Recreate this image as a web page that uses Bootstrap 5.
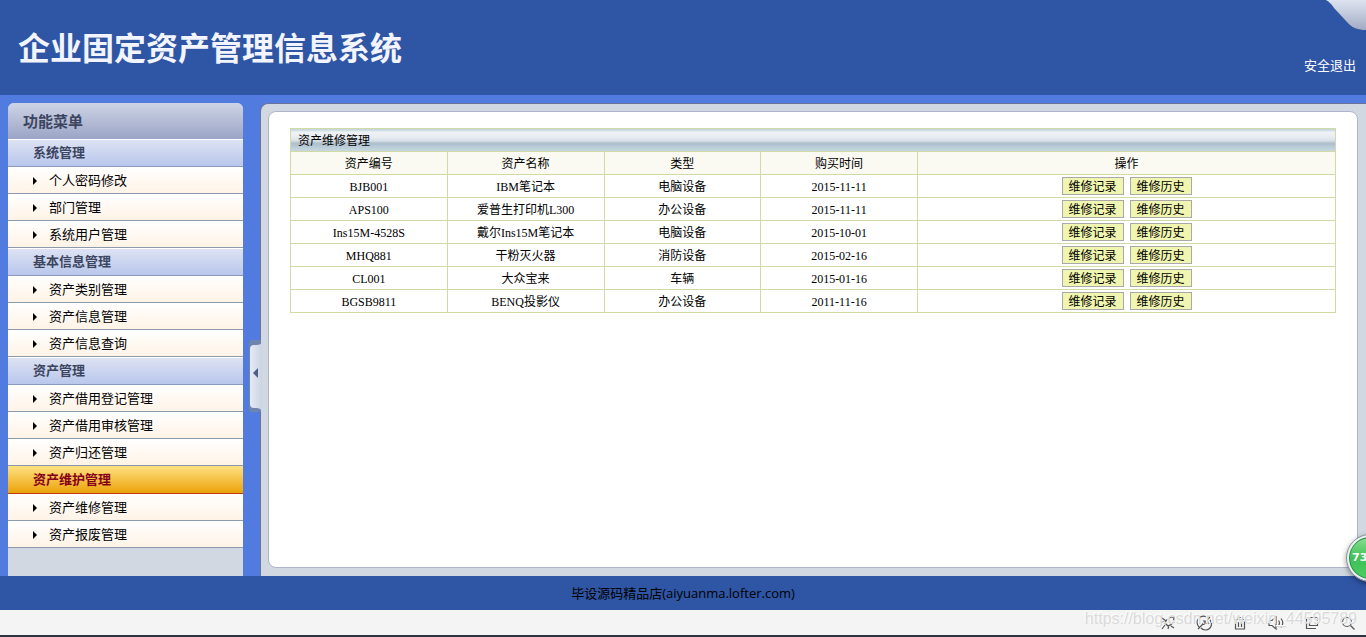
<!DOCTYPE html>
<html lang="zh-CN">
<head>
<meta charset="utf-8">
<meta name="viewport" content="width=device-width, initial-scale=1">
<title>企业固定资产管理信息系统</title>
<link href="https://cdn.jsdelivr.net/npm/bootstrap@5.3.0/dist/css/bootstrap.min.css" rel="stylesheet">
<style>
body{background:#527be0;color:#000;font-family:"Open Sans","Noto Sans CJK SC",sans-serif;font-size:13px;line-height:20px;overflow-x:hidden}
a{color:inherit;text-decoration:none}
.bar-blue{background:#2f55a5}
.masthead{min-height:95px;padding:0 10px 0 18px}
.masthead h1{font-size:32px;line-height:40px;font-weight:700;color:#f2f4ff;margin:28px 0 0}
.logout{color:#fff;margin-bottom:20px}
.corner{position:absolute;top:0;right:0}
.side{width:235px;margin-left:8px;margin-top:8px;background:#d1d8e2;border-radius:6px 6px 0 0;overflow:hidden}
.side-title{height:36px;padding:0 15px;font-size:15px;font-weight:700;color:#3c4560;background:linear-gradient(#cdd4e6,#9ba4c6)}
.grp{height:28px;padding:0 25px;font-size:13px;font-weight:700;color:#3c4560;background:linear-gradient(#dde2f3,#b9c7ec);border-top:1px solid #fff;border-bottom:1px solid #8c9abb}
.grp.on{color:#87001a;background:linear-gradient(#ffdf7d,#eba20a);border-top-color:#ffdf7d;border-bottom-color:#c03a10}
.item{height:27px;padding:0 25px 1px;gap:12px;background:linear-gradient(#fff,#fff3e6);border-bottom:1px solid #8c9aae}
.item::before{content:"";border:4px solid transparent;border-left:4px solid #000;border-right:0;margin-top:3px}
.work{margin:8px 0 0 17px;background:#d1d8e2;border:1px solid #68729a;border-width:1px 0 0 1px;border-radius:8px 0 0 0;padding:7px 8px 8px 7px}
.sheet{background:#fff;border:1px solid #adb5cd;border-radius:8px;padding:16px 21px}
.handle{position:absolute;left:-13px;top:50%;width:14px;height:72px;padding:0;border:0;background:none}
.assets{width:100%;table-layout:fixed;border-collapse:collapse;font-family:"Liberation Serif","Noto Sans CJK SC",serif;font-size:12px;line-height:16px}
.assets th,.assets td{height:23px;padding:1px 0 0;text-align:center;font-weight:400;border:1px solid #cfdaa5;vertical-align:middle}
.assets .t-title th{text-align:left;padding-left:7px;background:linear-gradient(#c5d7de 0 1px,#eef1f6 2px,#eaeef3 7px,#d4dee6 12px,#b0c0cd 13px,#b0c0cd 15px,#b9cbd8 17px,#c8d9e0 22px)}
.assets .t-head th{background:#fafaf2}
.assets td:last-child{padding:0}
.act{display:inline-block;width:62px;height:18px;padding:1px 0 0;border:1px solid #a9a9a9;background:#f0f6b0;color:#000;font-size:12px;line-height:16px;vertical-align:middle}
.act + .act{margin-left:6px}
.foot{height:34px}
.tools{height:27px;background:#f4f4f4;border-bottom:2px solid #2e3340;padding-right:10px;gap:20px}
.tools button{border:0;background:none;padding:0;width:16px;height:16px;line-height:0}
.tools svg{width:16px;height:16px;fill:none;stroke:#555;stroke-width:1.2}
.mark-url{position:absolute;right:9px;top:-2px;font:16px/22px "Liberation Sans",sans-serif;color:#dadada;text-shadow:-1px -1px 0 #fff;pointer-events:none}
.ball{position:absolute;right:-27px;bottom:56px;width:46px;height:46px;border-radius:50%;border:2px solid #eceff0;background:linear-gradient(#8ce093,#3fc157 50%,#4dcc62);outline:1px solid #8a9a98;box-shadow:inset 0 0 0 1px #248c4a,0 2px 6px #0008;color:#fff;font:bold 11px/42px "DejaVu Sans",sans-serif;padding-left:3px}
</style>
</head>
<body>
<div class="position-relative overflow-hidden min-vh-100 d-flex flex-column">
<header class="masthead bar-blue d-flex justify-content-between position-relative">
<h1>企业固定资产管理信息系统</h1>
<a class="logout align-self-end" href="#">安全退出</a>
<svg class="corner" width="40" height="30" aria-hidden="true"><defs><linearGradient id="cg" x2="0" y2="1"><stop stop-color="#dde3ef"/><stop offset="1" stop-color="#a2abc4"/></linearGradient></defs><path d="M0 0c4 2 6 5 8 8L21 22c5 6 11 8 19 8V0Z" fill="url(#cg)"/></svg>
</header>
<div class="d-flex flex-grow-1">
<nav class="side flex-shrink-0">
<div class="side-title d-flex align-items-center">功能菜单</div>
<h2 class="grp m-0 d-flex align-items-center">系统管理</h2>
<a class="item d-flex align-items-center" href="#">个人密码修改</a>
<a class="item d-flex align-items-center" href="#">部门管理</a>
<a class="item d-flex align-items-center" href="#">系统用户管理</a>
<h2 class="grp m-0 d-flex align-items-center">基本信息管理</h2>
<a class="item d-flex align-items-center" href="#">资产类别管理</a>
<a class="item d-flex align-items-center" href="#">资产信息管理</a>
<a class="item d-flex align-items-center" href="#">资产信息查询</a>
<h2 class="grp m-0 d-flex align-items-center">资产管理</h2>
<a class="item d-flex align-items-center" href="#">资产借用登记管理</a>
<a class="item d-flex align-items-center" href="#">资产借用审核管理</a>
<a class="item d-flex align-items-center" href="#">资产归还管理</a>
<h2 class="grp on m-0 d-flex align-items-center">资产维护管理</h2>
<a class="item d-flex align-items-center" href="#">资产维修管理</a>
<a class="item d-flex align-items-center" href="#">资产报废管理</a>
</nav>
<main class="work position-relative flex-grow-1 d-flex">
<button class="handle" type="button" aria-label="收起菜单"><svg class="d-block" width="14" height="72"><defs><linearGradient id="hg"><stop stop-color="#e6eaf6"/><stop offset="1" stop-color="#cbd3e2"/></linearGradient></defs><path d="M13 0H4Q1 0 1 4V68Q1 72 4 72H13Z" fill="#6f84ac"/><path d="M14 3Q12 5 9 5H6Q2 5 2 9V64Q2 68 6 68H9Q12 68 14 71Z" fill="url(#hg)"/><path d="M10 28v10l-5-5z" fill="#4d5f85"/></svg></button>
<div class="sheet flex-grow-1">
<table class="assets">
<colgroup><col style="width:15%"><col style="width:15%"><col style="width:15%"><col style="width:15%"><col style="width:40%"></colgroup>
<thead>
<tr class="t-title"><th colspan="5">资产维修管理</th></tr>
<tr class="t-head"><th scope="col">资产编号</th><th scope="col">资产名称</th><th scope="col">类型</th><th scope="col">购买时间</th><th scope="col">操作</th></tr>
</thead>
<tbody>
<tr><td>BJB001</td><td>IBM笔记本</td><td>电脑设备</td><td>2015-11-11</td><td><button class="act" type="button">维修记录</button><button class="act" type="button">维修历史</button></td></tr>
<tr><td>APS100</td><td>爱普生打印机L300</td><td>办公设备</td><td>2015-11-11</td><td><button class="act" type="button">维修记录</button><button class="act" type="button">维修历史</button></td></tr>
<tr><td>Ins15M-4528S</td><td>戴尔Ins15M笔记本</td><td>电脑设备</td><td>2015-10-01</td><td><button class="act" type="button">维修记录</button><button class="act" type="button">维修历史</button></td></tr>
<tr><td>MHQ881</td><td>干粉灭火器</td><td>消防设备</td><td>2015-02-16</td><td><button class="act" type="button">维修记录</button><button class="act" type="button">维修历史</button></td></tr>
<tr><td>CL001</td><td>大众宝来</td><td>车辆</td><td>2015-01-16</td><td><button class="act" type="button">维修记录</button><button class="act" type="button">维修历史</button></td></tr>
<tr><td>BGSB9811</td><td>BENQ投影仪</td><td>办公设备</td><td>2011-11-16</td><td><button class="act" type="button">维修记录</button><button class="act" type="button">维修历史</button></td></tr>
</tbody>
</table>
</div>
</main>
</div>
<footer class="foot bar-blue d-flex align-items-center justify-content-center">毕设源码精品店(aiyuanma.lofter.com)</footer>
<div class="tools position-relative d-flex align-items-center justify-content-end">
<button type="button" aria-label="加速"><svg viewBox="0 0 16 16"><path d="M14 2C9 2 6 5 5 8l3 3c4-1 6-4 6-9ZM6 6 2.500 7M9 10l-1 4M5 10l-3 4M2 3l4 3M11 11l3 2M9 7l1-1"/></svg></button>
<button type="button" aria-label="修复"><svg viewBox="0 0 16 16"><path d="M12 3A6 6 0 0 0 3 12M14 5a6 6 0 0 1-9 8M2 14 14 2M8 5v5M6 8h5M11 6l2 3"/></svg></button>
<button type="button" aria-label="清理"><svg viewBox="0 0 16 16"><path d="M2 4.500h12M5.500 4.500v-2h5v2M3.500 5v9h9V5M6.500 7v5M9.500 7v5"/></svg></button>
<button type="button" aria-label="声音"><svg viewBox="0 0 16 16"><path d="M1 5.500h3l4-3.500v12l-4-3.500H1ZM10.500 5.500q2 2.500 0 5M13 3.500q3.500 4.500 0 9"/></svg></button>
<button type="button" aria-label="窗口"><svg viewBox="0 0 16 16"><path d="M5.500 2.500h8v8h-8ZM2.500 4v9.500H12"/></svg></button>
<button type="button" aria-label="搜索"><svg viewBox="0 0 16 16"><circle cx="7" cy="7" r="4.500"/><path d="m10.500 10.500 4 4"/></svg></button>
<span class="mark-url">https://blog.csdn.net/weixin_44595789</span>
</div>
<div class="ball">73</div>
</div>
<script src="https://cdn.jsdelivr.net/npm/bootstrap@5.3.0/dist/js/bootstrap.bundle.min.js"></script>
</body>
</html>
